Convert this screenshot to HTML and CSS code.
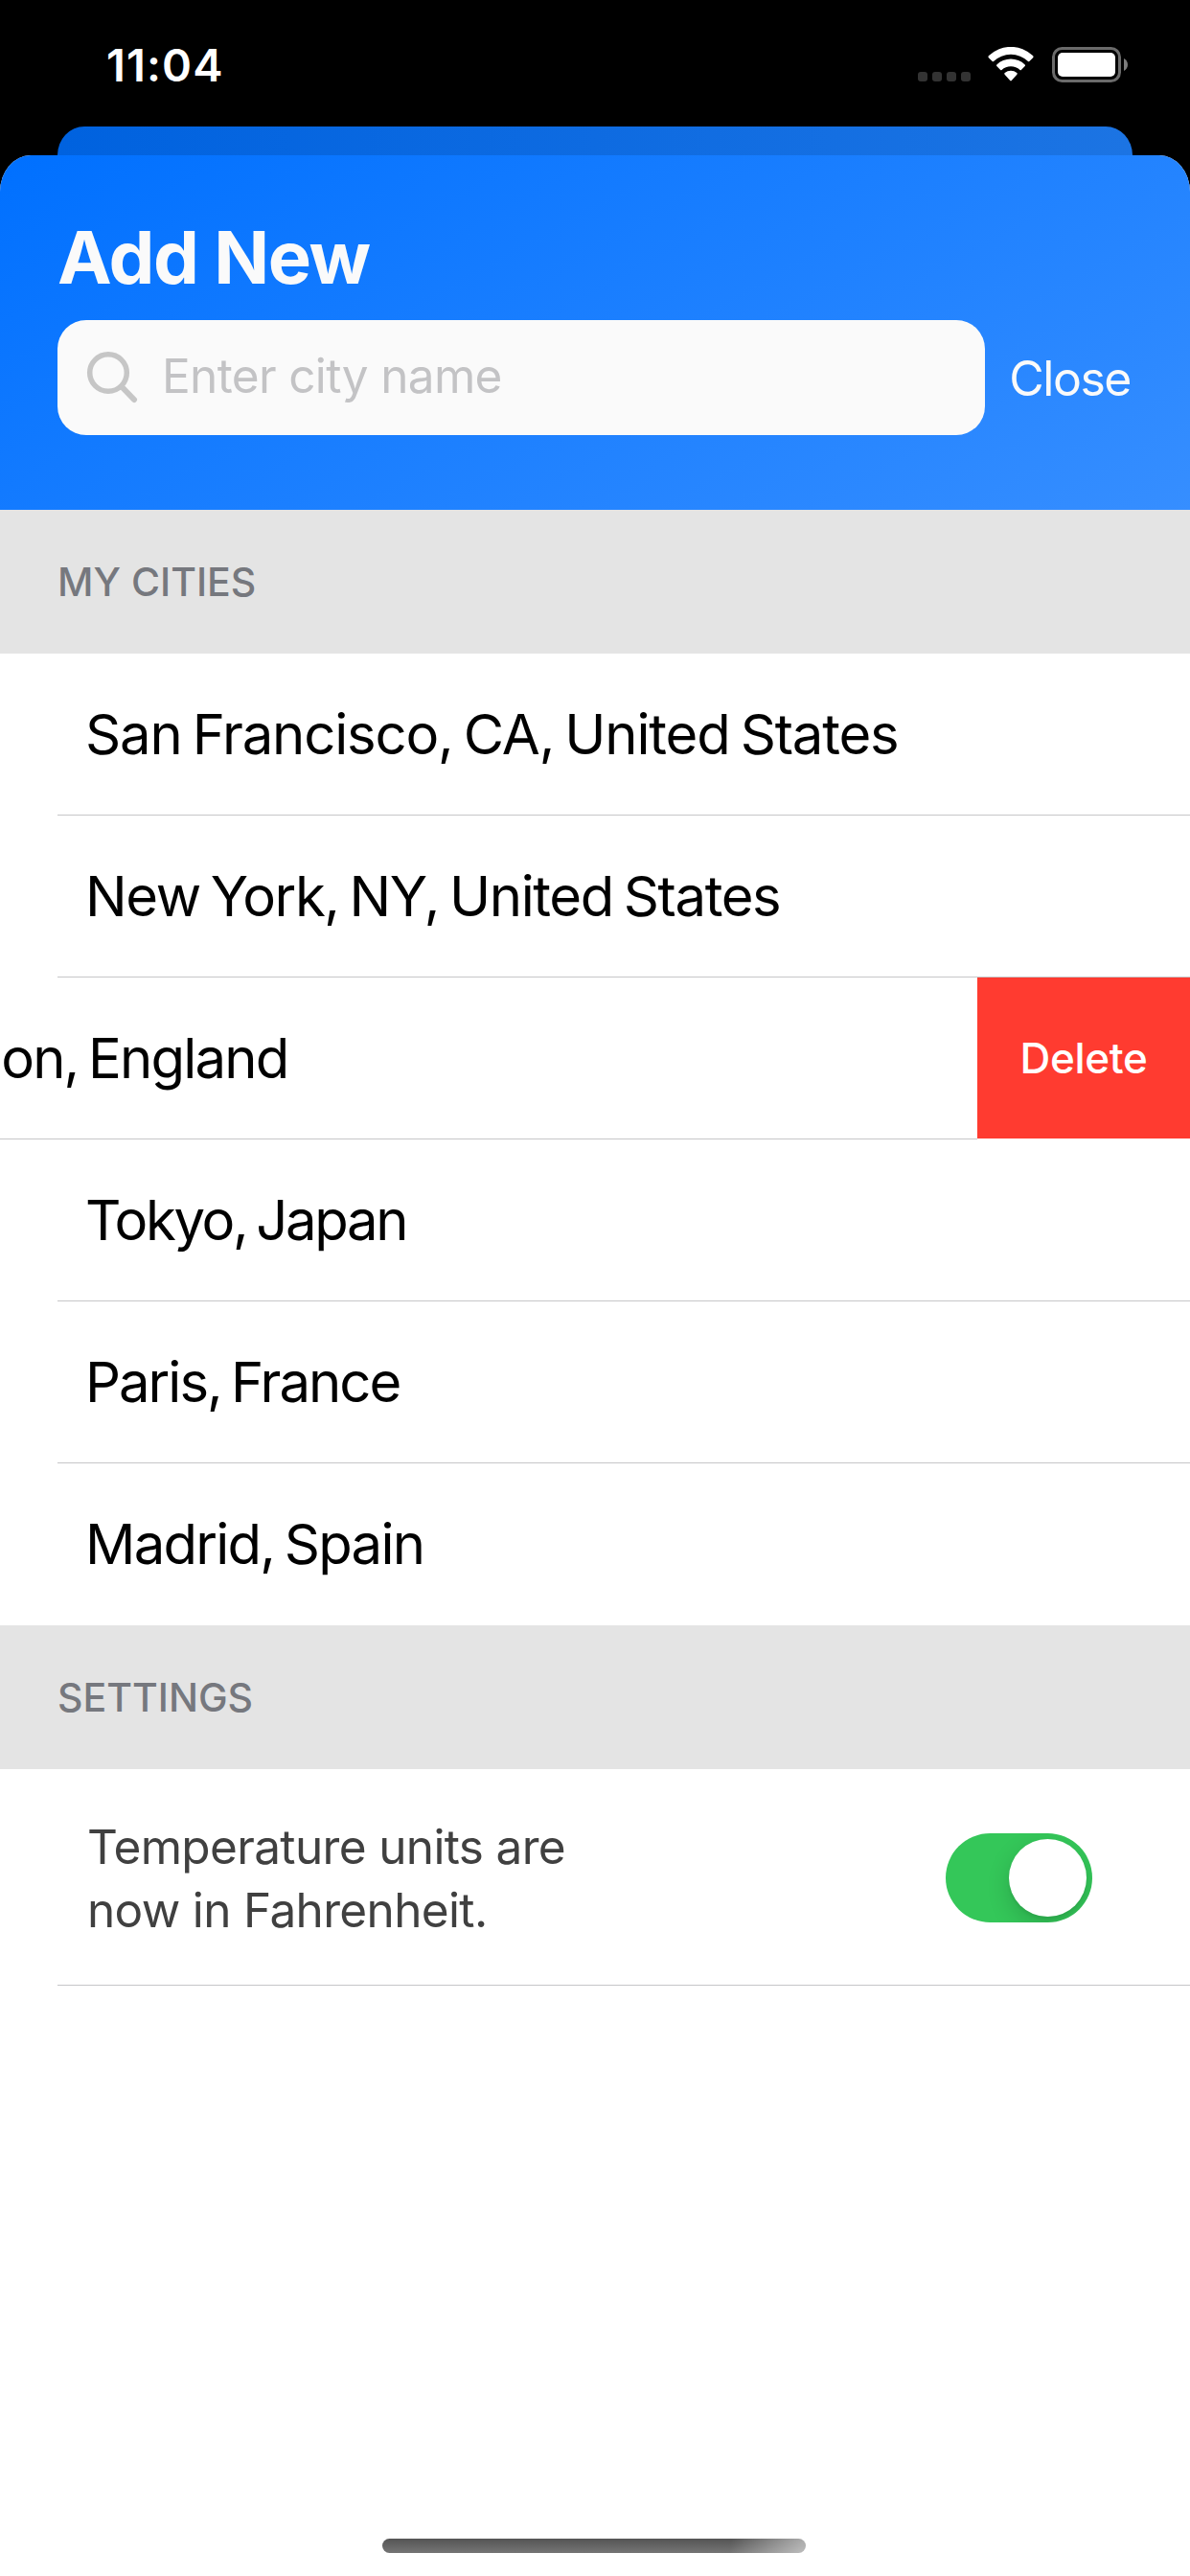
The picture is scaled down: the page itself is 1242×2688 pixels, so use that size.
FILE: index.html
```html
<!DOCTYPE html>
<html lang="en">
<head>
<meta charset="utf-8">
<title>Add New City</title>
<link rel="stylesheet" href="styles.css">
</head>
<body>
<div class="screen">
  <div class="status-bar">
    <span class="time">11:04</span>
    <div class="indicators">
      <div class="cell-dots"><i></i><i></i><i></i><i></i></div>
      <svg class="wifi" viewBox="0 0 48 36" width="48" height="36">
        <path d="M1.1 11.6 Q-.2 10.3 1.1 9.1 A33 33 0 0 1 46.9 9.1 Q48.2 10.3 46.9 11.6 L43.3 15 Q42.700 15.600 42 15 A26 26 0 0 0 6 15 Q5.300 15.600 4.700 15 Z"/>
        <path d="M9.300 20 Q8.500 19.200 9.300 18.400 A21.500 21.500 0 0 1 38.700 18.400 Q39.500 19.200 38.700 20 L34.800 24 Q34.200 24.600 33.500 24 A14.200 14.200 0 0 0 14.500 24 Q13.800 24.600 13.200 24 Z"/>
        <path d="M17.600 28.800 Q16.700 27.900 17.700 27.100 A10 10 0 0 1 30.300 27.100 Q31.300 27.900 30.400 28.800 L24.800 35 Q24 35.900 23.200 35 Z"/>
      </svg>
      <svg class="battery" viewBox="0 0 80 38" width="80" height="38">
        <rect x="1.500" y="1.500" width="69" height="34" rx="9" fill="none" stroke="#6b6b6b" stroke-width="3"/>
        <rect x="6" y="6" width="60" height="25" rx="5" fill="#fff"/>
        <path d="M75 12 C80.300 14.500 80.300 22.500 75 25 Z" fill="#7d7d7d"/>
      </svg>
    </div>
  </div>
  <div class="back-card"></div>
  <main class="sheet">
    <header class="header">
      <h1 class="title">Add New</h1>
      <div class="search-row">
        <div class="search-field">
          <svg class="search-icon" viewBox="0 0 54 56" width="54" height="56">
            <g fill="none" stroke="#c6c6c6" stroke-width="5.500">
              <circle cx="23" cy="23" r="19.300"/>
              <path d="M37 37.500 L50 51" stroke-linecap="round" stroke-width="6"/>
            </g>
          </svg>
          <span class="placeholder">Enter city name</span>
        </div>
        <span class="close">Close</span>
      </div>
    </header>
    <h2 class="section">MY CITIES</h2>
    <div class="list">
      <div class="row"><div class="cell san-francisco">San Francisco, CA, United States</div></div>
      <div class="row"><div class="cell new-york">New York, NY, United States</div></div>
      <div class="row swiped">
        <div class="cell london">London, England</div>
        <div class="delete">Delete</div>
      </div>
      <div class="row"><div class="cell tokyo">Tokyo, Japan</div></div>
      <div class="row"><div class="cell paris">Paris, France</div></div>
      <div class="row last"><div class="cell madrid">Madrid, Spain</div></div>
    </div>
    <h2 class="section">SETTINGS</h2>
    <div class="setting">
      <p class="setting-text">Temperature units are<br>now in Fahrenheit.</p>
      <div class="toggle"><div class="knob"></div></div>
    </div>
    <div class="home-bar"></div>
  </main>
</div>
</body>
</html>
```
FILE: styles.css
```css
* { box-sizing: border-box; }
body {
  margin: 0;
  background: #000;
  font-family: Inter, "Liberation Sans", sans-serif;
}
.screen {
  width: 1242px;
  height: 2688px;
  display: flex;
  flex-direction: column;
  background: #000;
  overflow: hidden;
  white-space: nowrap;
}
.status-bar {
  height: 132px;
  flex: none;
  display: flex;
  justify-content: space-between;
  padding: 0 64px 0 111px;
}
.time {
  color: #fff;
  font-size: 47px;
  font-weight: 600;
  line-height: 136px;
  letter-spacing: 1.1px;
}
.indicators { display: flex; align-items: flex-start; padding-top: 49px; }
.cell-dots { display: flex; gap: 5px; padding-top: 26px; margin-right: 18px; }
.cell-dots i { width: 10px; height: 10px; border-radius: 3px; background: #333; }
.wifi { fill: #fff; margin-right: 19px; }
.back-card {
  flex: none;
  height: 30px;
  margin: 0 60px;
  border-radius: 28px 28px 0 0 / 30px 30px 0 0;
  background: linear-gradient(90deg, #0062df, #1c74e3);
}
.sheet {
  flex: 1;
  display: flex;
  flex-direction: column;
  background: #fff;
  border-radius: 32px 32px 0 0 / 38px 38px 0 0;
  overflow: hidden;
}
.header {
  flex: none;
  height: 370px;
  padding: 60px 60px 0;
  background: linear-gradient(151deg, #0070ff, #368eff);
}
.title {
  margin: 0;
  height: 112px;
  font-size: 76px;
  line-height: 93px;
  font-weight: 700;
  letter-spacing: -1.4px;
  color: #fafafa;
}
.search-row { display: flex; align-items: center; justify-content: space-between; height: 120px; }
.search-field {
  width: 968px;
  height: 120px;
  border-radius: 30px;
  background: #fafafa;
  display: flex;
  align-items: center;
  padding-left: 30px;
}
.placeholder { margin: 0 0 4px 25px; font-size: 49.5px; letter-spacing: -.65px; color: #c3c3c5; }
.close { font-size: 50px; line-height: 60px; letter-spacing: -1.5px; color: #fafafa; padding: 2px 2px 0 0; }
.section {
  flex: none;
  margin: 0;
  height: 150px;
  padding-left: 60px;
  background: #e4e4e4;
  color: #76787e;
  font-size: 41px;
  font-weight: 500;
  line-height: 150px;
}
.list { flex: none; }
.row { height: 169px; display: flex; padding-left: 60px; }
.cell {
  flex: 1;
  padding-left: 29px;
  border-bottom: 1px solid #c6c6c8;
  font-size: 58px;
  line-height: 168px;
  word-spacing: -4px;
  color: #000;
}
.san-francisco { letter-spacing: -1.17px; }
.new-york { letter-spacing: -1.4px; }
.london { letter-spacing: -1.8px; }
.tokyo { letter-spacing: -2.35px; }
.paris { letter-spacing: -2px; }
.madrid { letter-spacing: -1.75px; }
.last .cell { border-bottom: 0; }
.swiped { padding-left: 0; }
.swiped .cell {
  margin-left: -162px;
  padding-left: 33px;
  flex: none;
  width: 1182px;
}
.delete {
  width: 222px;
  height: 168px;
  background: #ff3b30;
  color: #fff;
  font-size: 44px;
  font-weight: 500;
  letter-spacing: -.3px;
  line-height: 168px;
  text-align: center;
}
.setting {
  flex: none;
  height: 226px;
  margin-left: 60px;
  padding: 2px 102px 0 31px;
  border-bottom: 1px solid #c6c6c8;
  display: flex;
  align-items: center;
  justify-content: space-between;
}
.setting-text { margin: 0; font-size: 49.5px; line-height: 66px; letter-spacing: -.65px; color: #404040; }
.toggle {
  width: 153px;
  height: 93px;
  padding: 6px;
  border-radius: 47px;
  background: #34c759;
  display: flex;
  justify-content: flex-end;
  overflow: hidden;
}
.knob { width: 81px; height: 81px; border-radius: 50%; background: #fff; box-shadow: 0 9px 24px rgba(0, 0, 0, .16), 0 3px 3px rgba(0, 0, 0, .06); }
.home-bar {
  width: 442px;
  height: 15px;
  margin: auto auto 24px 399px;
  border-radius: 8px;
  background: linear-gradient(100deg, transparent 82%, rgba(255, 255, 255, .5) 99%), linear-gradient(#545454, #757575);
}
```
